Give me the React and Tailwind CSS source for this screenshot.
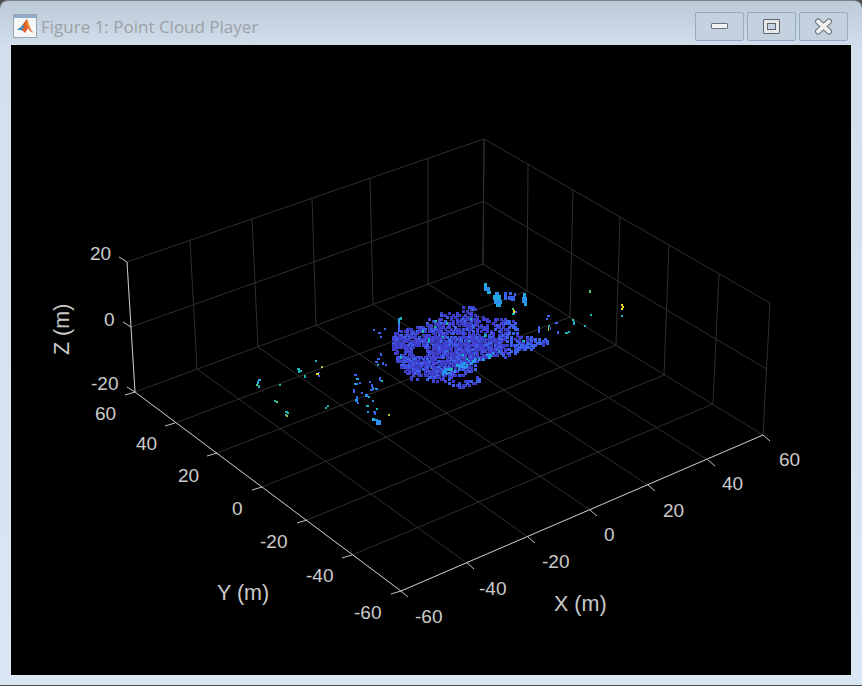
import React from 'react';

// axis and wall points, in page pixels, going from low value to high value
const xAxis = [[401, 591], [467, 563], [528, 537], [590, 510], [648, 485], [708, 460], [763, 435]];
const yAxis = [[401, 591], [352, 555], [307, 520], [262, 487], [217, 453], [175, 423], [135, 392]];
const backLeft = [[135, 392], [197, 369], [258, 347], [316, 325], [373, 304], [428, 284], [483, 264]];
const backRight = [[763, 435], [713, 404], [664, 375], [616, 345], [570, 317], [527, 291], [483, 264]];
const topLeft = [[127, 262], [190, 240], [252, 219], [312, 198], [370, 179], [428, 158], [484, 139]];
const topRight = [[770, 303], [719, 274], [669, 245], [620, 217], [573, 190], [528, 165], [484, 139]];

const mid = (a, b) => [(a[0] + b[0]) / 2, (a[1] + b[1]) / 2];

const gridLines = [];
xAxis.forEach((p, i) => gridLines.push([p, backLeft[i]]));
yAxis.forEach((p, i) => gridLines.push([p, backRight[i]]));
backLeft.forEach((p, i) => gridLines.push([p, topLeft[i]]));
backRight.forEach((p, i) => gridLines.push([p, topRight[i]]));
gridLines.push([topLeft[0], topLeft[6]], [topLeft[6], topRight[0]]);
gridLines.push([mid(topLeft[0], backLeft[0]), mid(topLeft[6], backLeft[6])]);
gridLines.push([mid(topLeft[6], backLeft[6]), mid(topRight[0], backRight[0])]);

const axisLines = [
  [xAxis[0], xAxis[6]],
  [yAxis[0], yAxis[6]],
  [topLeft[0], backLeft[0]],
];
xAxis.forEach((p) => axisLines.push([p, [p[0] + 7, p[1] + 6]]));
yAxis.forEach((p) => axisLines.push([p, [p[0] - 10, p[1] + 3]]));
[topLeft[0], mid(topLeft[0], backLeft[0]), backLeft[0]].forEach((p) => axisLines.push([p, [p[0] - 8, p[1] - 5]]));

// [text, left edge, baseline]
const tickLabels = [
  ['20', 90, 260], ['0', 104, 326], ['-20', 91, 390],
  ['60', 95, 420], ['40', 136, 450], ['20', 178, 482], ['0', 232, 515], ['-20', 260, 548], ['-40', 306, 582], ['-60', 354, 619],
  ['-60', 415, 623], ['-40', 479, 595], ['-20', 542, 568], ['0', 604, 541], ['20', 663, 517], ['40', 722, 490], ['60', 779, 466],
];

const INDIGO = '#3b3dc4';
const VIOLET = '#4444d8';
const BLUE = '#3b62ee';
const SKY = '#2a92ee';
const CYAN = '#1fa8e0';
const TEAL = '#17b6b4';
const GREEN = '#4fc87a';
const LIME = '#9ccb3c';
const YELLOW = '#f4dc22';

// stray returns outside the main car cluster: x, y, w, h, colour
const strays = [
  [258, 379, 3, 2, CYAN], [257, 381, 2, 3, CYAN], [256, 384, 2, 2, GREEN], [258, 385, 2, 3, TEAL],
  [279, 384, 2, 2, TEAL], [274, 400, 2, 2, TEAL], [276, 401, 2, 2, GREEN], [285, 411, 3, 2, TEAL], [287, 412, 2, 2, TEAL],
  [285, 414, 2, 2, CYAN], [286, 415, 2, 2, LIME], [297, 368, 3, 2, TEAL], [298, 370, 2, 3, TEAL], [300, 370, 2, 2, TEAL],
  [304, 375, 2, 3, TEAL], [315, 360, 2, 2, TEAL], [321, 366, 2, 2, LIME], [316, 373, 3, 2, YELLOW], [318, 372, 2, 1, BLUE],
  [318, 375, 2, 2, BLUE], [325, 407, 2, 2, TEAL], [327, 405, 2, 2, TEAL],
  [354, 374, 3, 2, BLUE], [356, 378, 3, 2, CYAN], [354, 383, 4, 2, SKY], [359, 382, 2, 2, BLUE], [353, 389, 2, 4, BLUE],
  [361, 392, 2, 2, BLUE], [365, 394, 3, 3, SKY], [368, 396, 2, 2, CYAN], [369, 381, 2, 2, BLUE], [371, 384, 2, 3, BLUE],
  [372, 387, 2, 3, SKY], [370, 389, 3, 2, BLUE], [375, 388, 3, 2, SKY], [379, 377, 2, 4, BLUE], [381, 380, 2, 2, TEAL],
  [356, 396, 2, 3, BLUE], [355, 399, 3, 3, SKY], [357, 402, 2, 2, BLUE], [372, 400, 2, 2, SKY], [366, 405, 3, 2, TEAL],
  [367, 411, 2, 2, SKY], [376, 408, 2, 2, TEAL], [373, 411, 3, 2, BLUE], [374, 413, 2, 2, BLUE], [388, 414, 2, 2, LIME],
  [372, 418, 3, 3, CYAN], [375, 419, 3, 2, SKY], [376, 420, 5, 5, SKY],
  [377, 358, 3, 2, BLUE], [380, 353, 2, 3, BLUE], [375, 361, 3, 2, BLUE], [382, 362, 2, 3, BLUE], [385, 364, 2, 2, BLUE],
  [373, 329, 2, 2, BLUE], [378, 332, 3, 2, BLUE], [384, 328, 2, 2, BLUE], [380, 336, 2, 2, BLUE], [377, 364, 2, 2, CYAN],
  [398, 318, 2, 6, CYAN], [400, 317, 2, 3, TEAL], [398, 324, 2, 8, BLUE],
  // the bright blobs behind the car
  [484, 283, 3, 4, CYAN], [484, 287, 6, 4, SKY], [487, 291, 4, 3, CYAN], [495, 292, 4, 3, SKY], [493, 295, 8, 5, CYAN],
  [494, 300, 8, 4, SKY], [496, 304, 5, 3, CYAN], [504, 292, 3, 8, BLUE], [508, 296, 3, 4, BLUE], [509, 292, 3, 3, BLUE],
  [511, 296, 4, 5, BLUE], [514, 293, 2, 3, BLUE], [523, 293, 3, 4, CYAN], [522, 297, 5, 6, SKY], [524, 303, 3, 3, CYAN],
  [512, 308, 2, 2, GREEN], [513, 310, 2, 3, YELLOW], [512, 313, 3, 2, TEAL], [515, 311, 2, 2, BLUE],
  [547, 315, 3, 2, BLUE], [546, 318, 2, 2, BLUE], [548, 325, 2, 2, CYAN], [548, 327, 1, 4, LIME], [550, 327, 1, 3, BLUE],
  [555, 322, 3, 2, BLUE], [538, 326, 2, 7, BLUE], [557, 331, 2, 3, BLUE], [565, 332, 3, 2, TEAL], [568, 331, 2, 2, TEAL],
  [572, 319, 2, 2, GREEN], [573, 321, 2, 4, CYAN], [584, 325, 2, 2, TEAL], [590, 314, 2, 2, TEAL], [589, 290, 2, 3, GREEN],
  [621, 304, 2, 2, YELLOW], [622, 306, 2, 2, YELLOW], [621, 308, 2, 2, YELLOW], [621, 315, 2, 2, TEAL],
];

// cheap repeatable noise so the cloud stays the same on every render
const noise = (a, b) => {
  const v = Math.sin(a * 12.9898 + b * 78.233) * 43758.5453;
  return v - Math.floor(v);
};

const inside = (poly, x, y) => {
  let hit = false;
  for (let i = 0, j = poly.length - 1; i < poly.length; j = i++) {
    const [xi, yi] = poly[i];
    const [xj, yj] = poly[j];
    if (yi > y !== yj > y && x < ((xj - xi) * (y - yi)) / (yj - yi) + xi) hit = !hit;
  }
  return hit;
};

const body = [[390, 343], [393, 331], [417, 325], [443, 316], [473, 311], [483, 327], [500, 340], [503, 352], [477, 360], [453, 372], [438, 378], [413, 373], [397, 363]];
const roof = [[418, 320], [445, 309], [472, 304], [478, 312], [444, 318]];
const wing = [[500, 317], [514, 320], [518, 335], [547, 337], [547, 345], [520, 350], [503, 358], [497, 345]];
const bridge = [[478, 314], [500, 317], [502, 342], [484, 328]];
const front = [[452, 384], [478, 375], [480, 380], [454, 389]];
const skirt = [[398, 364], [438, 378], [477, 360], [478, 366], [445, 384], [410, 378]];

const buildCloud = () => {
  const pts = [];
  for (let x = 386; x < 552; x += 2) {
    for (let y = 302; y < 392; y += 2) {
      let density = 0;
      if (inside(body, x, y)) density = y < 335 ? 0.6 : 0.85;
      else if (inside(front, x, y)) density = 0.7;
      else if (inside(wing, x, y)) density = 0.55;
      else if (inside(bridge, x, y)) density = 0.3;
      else if (inside(skirt, x, y)) density = 0.3;
      else if (inside(roof, x, y)) density = 0.22;
      const hole = ((x - 418) / 8) ** 2 + ((y - 350) / 6) ** 2 < 1 || ((x - 400) / 3) ** 2 + ((y - 350) / 4) ** 2 < 1;
      const slit = (y > 356 && y < 359 && x > 434 && x < 446) || (y > 332 && y < 335 && x > 444 && x < 461);
      if (hole || slit || noise(x * 1.37, y * 0.71) > density) continue;
      const n = noise(y * 1.13 + 3, x * 0.91 + 7);
      const streak = Math.abs(y - (372 - (x - 440) * 0.33)) < 3 && x > 440 && x < 500;
      let fill = n < 0.55 ? INDIGO : VIOLET;
      if (n > 0.8 || (x > 505 && n > 0.3)) fill = BLUE;
      if (streak && n > 0.35) fill = n > 0.8 ? CYAN : SKY;
      if (n > 0.985) fill = TEAL;
      pts.push([x, y, fill]);
    }
  }
  return pts;
};

const cloud = buildCloud();

function PointCloudPlot() {
  return (
    <svg viewBox="11 45 840 630" className="block h-full w-full font-['Liberation_Sans',Arial,sans-serif]">
      <g stroke="#2f2f2f" strokeWidth="1" fill="none">
        {gridLines.map(([a, b], i) => (
          <line key={i} x1={a[0]} y1={a[1]} x2={b[0]} y2={b[1]} />
        ))}
      </g>
      <g stroke="#d8d8d8" strokeWidth="0.9" fill="none">
        {axisLines.map(([a, b], i) => (
          <line key={i} x1={a[0]} y1={a[1]} x2={b[0]} y2={b[1]} />
        ))}
      </g>
      <g shapeRendering="crispEdges">
        {cloud.map(([x, y, fill], i) => (
          <rect key={i} x={x} y={y} width="2.5" height="2.5" fill={fill} />
        ))}
        {strays.map(([x, y, w, h, fill], i) => (
          <rect key={i} x={x} y={y} width={w} height={h} fill={fill} />
        ))}
      </g>
      <g fill="#cbcbcb" fontSize="19">
        {tickLabels.map(([t, x, y], i) => (
          <text key={i} x={x} y={y}>{t}</text>
        ))}
      </g>
      <g fill="#cbcbcb" fontSize="21.5">
        <text x="554" y="611">X (m)</text>
        <text x="217" y="600">Y (m)</text>
        <text transform="translate(69 355) rotate(-90)">Z (m)</text>
      </g>
    </svg>
  );
}

function AppIcon() {
  return (
    <svg width="24" height="24" viewBox="0 0 24 24" className="shrink-0">
      <rect x="0.5" y="0.5" width="23" height="23" fill="#f4f6f8" stroke="#9aa5b0" />
      <rect x="1" y="1" width="22" height="3" fill="#8fabcb" />
      <path d="M4 16l4-3 2-3 4-5 4 11 3 3-4-2-2-3-3 5-3-3z" fill="#e2602a" />
      <path d="M4 16l4-3 2-3 1 3-2 3 1 1-3-1z" fill="#3d8fc4" />
      <path d="M14 5l4 11-4-5z" fill="#f3a23a" />
    </svg>
  );
}

function WinButton({ children }) {
  return (
    <button className="flex h-[29px] w-[49px] items-center justify-center rounded-[2px] border border-[#97aac1] bg-[#c4d1df]">
      {children}
    </button>
  );
}

export default function App() {
  return (
    <div className="h-[686px] w-[862px] bg-[#4b4f52]">
      <div className="flex h-[685px] flex-col rounded-t-[8px] border-t border-[#7d8288] bg-linear-to-b from-[#bccad8] from-0% via-[#d2e0ed] via-[7%] to-[#d9e6f3] to-100%">
        <div className="flex h-[44px] shrink-0 items-center pl-[13px] pr-[14px] pt-[6px]">
          <AppIcon />
          <span className="ml-[4px] mt-[2px] font-['Open_Sans',sans-serif] text-[17px] text-[#9da1a6]">Figure 1: Point Cloud Player</span>
          <div className="ml-auto flex gap-[3px]">
            <WinButton>
              <div className="h-[6px] w-[17px] rounded-[1px] border border-[#6a737d] bg-[#f2f2f2]" />
            </WinButton>
            <WinButton>
              <div className="h-[15px] w-[17px] rounded-[1px] border border-[#5d6670] bg-[#e8e8e8] p-[3px]">
                <div className="h-full w-full border border-[#5d6670] bg-[#c6d3e1]" />
              </div>
            </WinButton>
            <WinButton>
              <svg width="19" height="17" viewBox="0 0 19 17">
                <path d="M4 3.500L15 13.500M15 3.500L4 13.500" stroke="#66707b" strokeWidth="6" strokeLinecap="round" fill="none" />
                <path d="M4 3.500L15 13.500M15 3.500L4 13.500" stroke="#f0f0f0" strokeWidth="4" strokeLinecap="round" fill="none" />
              </svg>
            </WinButton>
          </div>
        </div>
        <div className="mx-[11px] h-[630px] bg-black">
          <PointCloudPlot />
        </div>
      </div>
    </div>
  );
}
